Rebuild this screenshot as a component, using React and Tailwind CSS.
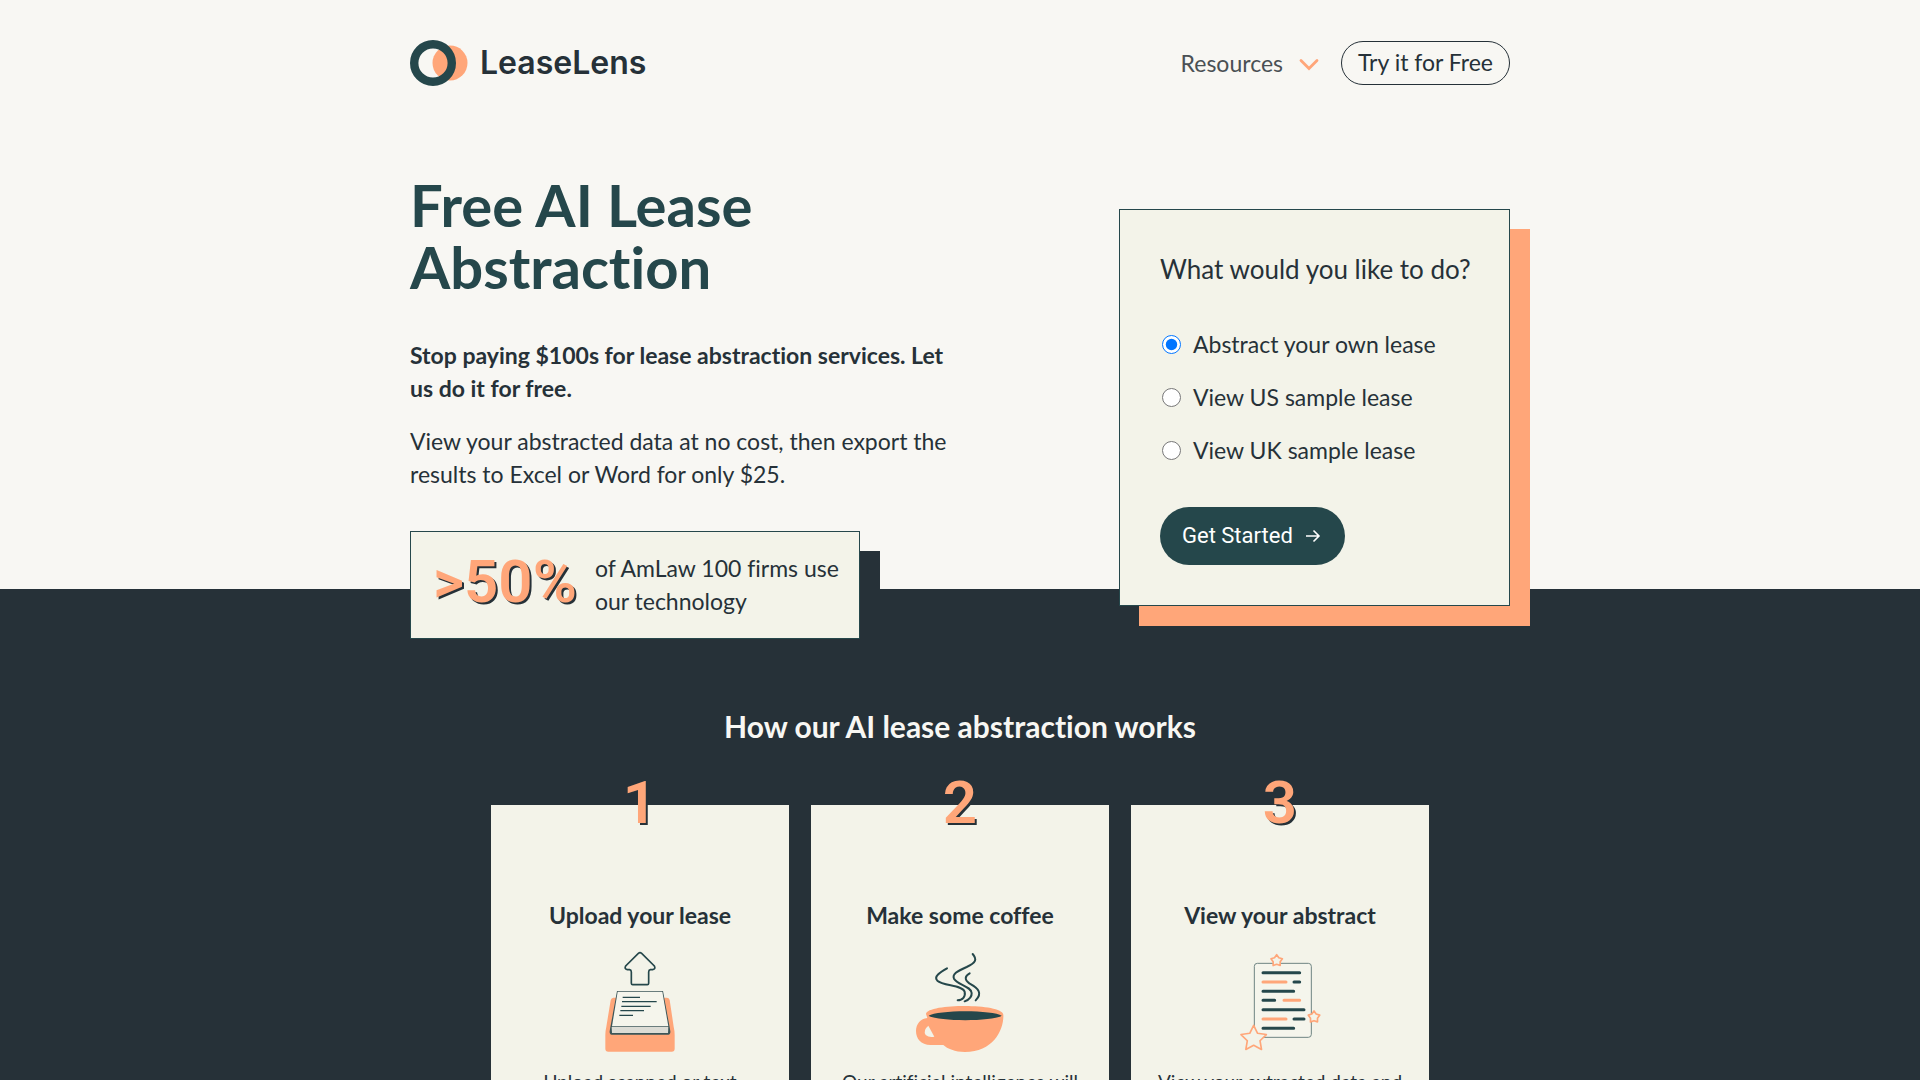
import React from "react";

const GREEN = "#25474b";
const ORANGE = "#ffa679";
const CREAM = "#f3f3e9";

function star(cx, cy, outer, inner) {
  return Array.from({ length: 10 }, (_, i) => {
    const r = i % 2 === 0 ? outer : inner;
    const a = (Math.PI / 5) * i - Math.PI / 2;
    return `${(cx + r * Math.cos(a)).toFixed(1)},${(cy + r * Math.sin(a)).toFixed(1)}`;
  }).join(" ");
}

function LogoMark() {
  return (
    <svg width="58" height="46" viewBox="0 0 58 46" aria-hidden="true">
      <circle cx="40" cy="23" r="17.5" fill={ORANGE} />
      <circle cx="23" cy="23" r="18.8" fill="none" stroke={GREEN} strokeWidth="8.4" />
    </svg>
  );
}

function UploadArt() {
  return (
    <svg width="110" height="110" viewBox="15 48 330 330" aria-hidden="true">
      <path
        d="M175 70Q180 66 185 70L223 108Q228 117 218 119L211 119Q206 120 206 126L206 160Q206 164 202 164L158 164Q154 164 154 160L154 126Q154 120 149 119L142 119Q132 117 137 108Z"
        fill="none"
        stroke={GREEN}
        strokeWidth="5"
      />
      <path
        d="M100 203H260Q267 203 269 210L281 290Q284 303 284 314V356Q284 365 275 365H85Q76 365 76 356V314Q76 303 79 290L92 211Q94 203 100 203Z"
        fill={ORANGE}
      />
      <path d="M111 183H249L271 303Q272 314 265 314H95Q88 314 89 303Z" fill="#3b5558" />
      <path d="M113 185H247L265 289H96Z" fill="#f5f5ec" />
      <path d="M95 291H265L264 309H96Z" fill="#dcdcd5" />
      <path
        d="M128 202H180M126 215H230M124 229H212M121 242H192M118 256H159"
        stroke={GREEN}
        strokeWidth="4"
      />
    </svg>
  );
}

function CoffeeArt() {
  return (
    <svg width="110" height="110" viewBox="15 48 330 330" aria-hidden="true">
      <path
        d="M78 252C80 235 140 228 195 228C250 228 308 236 310 254C312 300 280 366 195 366C165 366 142 356 130 345L92 345C62 345 48 325 48 303C48 282 62 266 82 264Z"
        fill={ORANGE}
      />
      <path d="M85 287L103 320Q88 324 77 315Q68 301 85 287Z" fill={CREAM} />
      <path d="M86 257C112 239 280 239 305 257C280 275 112 275 86 257Z" fill={GREEN} />
      <g fill="none" stroke={GREEN} strokeWidth="6" strokeLinecap="round">
        <path d="M141 115C120 127 100 140 112 152C130 168 188 165 194 185C197 200 188 211 173 211" />
        <path d="M218 72C232 88 228 98 200 111C170 124 156 133 162 146C172 165 213 168 215 189C216 203 207 209 194 214" />
        <path d="M209 130C195 138 192 148 208 160C236 175 248 190 227 211" />
      </g>
    </svg>
  );
}

function AbstractArt() {
  return (
    <svg width="110" height="110" viewBox="15 48 330 330" aria-hidden="true">
      <rect x="103" y="100" width="171" height="222" rx="9" fill="#f5f5ec" stroke="#6f8583" strokeWidth="3" />
      <g strokeWidth="9" strokeLinecap="round">
        <path
          d="M129 128H239M222 156H239M129 184H221M129 211H164M129 239H252M222 267H252M129 295H221"
          stroke={GREEN}
        />
        <path d="M129 156H198M192 211H239M129 267H198" stroke={ORANGE} />
      </g>
      <g fill={CREAM} stroke={ORANGE} strokeWidth="5" strokeLinejoin="round">
        <polygon points={star(170, 92, 18, 11)} />
        <polygon points={star(282, 261, 18, 11)} />
        <polygon points={star(101, 326, 40, 20)} />
      </g>
    </svg>
  );
}

const OPTIONS = [
  { id: "own", label: "Abstract your own lease" },
  { id: "us", label: "View US sample lease" },
  { id: "uk", label: "View UK sample lease" },
];

const STEPS = [
  {
    title: "Upload your lease",
    Art: UploadArt,
    text: "Upload scanned or text documents from your computer.",
  },
  {
    title: "Make some coffee",
    Art: CoffeeArt,
    text: "Our artificial intelligence will read your lease in minutes.",
  },
  {
    title: "View your abstract",
    Art: AbstractArt,
    text: "View your extracted data and export the results.",
  },
];

function Header() {
  return (
    <header className="flex items-center justify-between py-10">
      <a href="#home" className="flex items-center gap-3">
        <LogoMark />
        <span className="font-['Inter',sans-serif] text-[32px] leading-[46px] font-semibold">LeaseLens</span>
      </a>
      <nav className="flex items-center gap-[22px] text-[23px] leading-[33px]">
        <button type="button" className="flex items-center gap-4 text-[#4a5054]">
          Resources
          <svg width="20" height="14" viewBox="0 0 20 14" className="mt-1" aria-hidden="true">
            <path d="M2 2.5L10 10.5L18 2.5" fill="none" stroke={ORANGE} strokeWidth="2.8" strokeLinecap="round" />
          </svg>
        </button>
        <a href="#try" className="rounded-full border border-[#263138] px-4 pt-1 pb-[5px]">
          Try it for Free
        </a>
      </nav>
    </header>
  );
}

function StartForm() {
  return (
    <form
      className="mt-[35px] w-[391px] shrink-0 border border-[#25474b] bg-[#f3f3e9] p-10 shadow-[20px_20px_0_#ffa679]"
      onSubmit={(e) => e.preventDefault()}
    >
      <fieldset>
        <legend className="mb-10 text-[26px] leading-[38px] whitespace-nowrap">What would you like to do?</legend>
        <div className="flex flex-col gap-5">
          {OPTIONS.map((o, i) => (
            <label key={o.id} className="flex items-center gap-3 pl-0.5 text-[23px] leading-[33px]">
              <input type="radio" name="action" value={o.id} defaultChecked={i === 0} className="size-[19px]" />
              {o.label}
            </label>
          ))}
        </div>
      </fieldset>
      <button
        type="submit"
        className="mt-10 flex items-center gap-3 rounded-full bg-[#25474b] py-3 pr-6 pl-[22px] font-['Roboto',sans-serif] text-[22px] leading-[34px] text-white"
      >
        Get Started
        <svg width="16" height="14" viewBox="0 0 16 14" aria-hidden="true">
          <path d="M1 7H14M8.500 1.500L14 7L8.500 12.500" fill="none" stroke="currentColor" strokeWidth="1.6" />
        </svg>
      </button>
    </form>
  );
}

function Hero() {
  return (
    <section className="relative z-10 flow-root bg-[#f8f7f3]">
      <div className="mx-auto max-w-[1100px]">
        <Header />
        <div className="-mb-[50px] flex items-start justify-between pt-12">
          <div className="max-w-[550px]">
            <h1 className="text-[58px] leading-[62px] font-bold text-[#25474b]">Free AI Lease Abstraction</h1>
            <p className="mt-[41px] text-[23px] leading-[33px] font-bold">
              Stop paying $100s for lease abstraction services. Let us do it for free.
            </p>
            <p className="mt-5 text-[23px] leading-[33px]">
              View your abstracted data at no cost, then export the results to Excel or Word for only $25.
            </p>
            <div className="mt-10 flex w-[450px] items-start gap-[18px] border border-[#25474b] bg-[#f3f3e9] py-5 pr-4 pl-[22px] shadow-[20px_20px_0_#263138]">
              <strong className="font-['Roboto',sans-serif] text-[60px] leading-[60px] font-semibold text-[#ffa679] [text-shadow:2px_2px_0_#263138]">
                &gt;50%
              </strong>
              <p className="text-[23px] leading-[33px]">of AmLaw 100 firms use our technology</p>
            </div>
          </div>
          <StartForm />
        </div>
      </div>
    </section>
  );
}

function Steps() {
  return (
    <section className="bg-[#263138] pt-[118px] pb-20">
      <h2 className="text-center text-[30px] leading-[39px] font-bold text-[#f8f7f3]">
        How our AI lease abstraction works
      </h2>
      <ol className="mx-auto mt-[59px] grid max-w-[938px] grid-cols-3 gap-[22px]">
        {STEPS.map(({ title, Art, text }, i) => (
          <li key={title} className="flex flex-col items-center bg-[#f3f3e9] px-5 pb-8 text-center">
            <span className="-mt-8 font-['Roboto',sans-serif] text-[60px] leading-[60px] font-semibold text-[#ffa679] [text-shadow:2px_2px_0_#263138]">
              {i + 1}
            </span>
            <h3 className="mt-[66px] mb-3.5 text-[23px] leading-[33px] font-bold">{title}</h3>
            <Art />
            <p className="mt-3 text-[19px] leading-7">{text}</p>
          </li>
        ))}
      </ol>
    </section>
  );
}

export default function App() {
  return (
    <main className="min-h-screen bg-[#263138] font-['Lato',sans-serif] text-[#263138] [font-variant-ligatures:none]">
      <Hero />
      <Steps />
    </main>
  );
}
